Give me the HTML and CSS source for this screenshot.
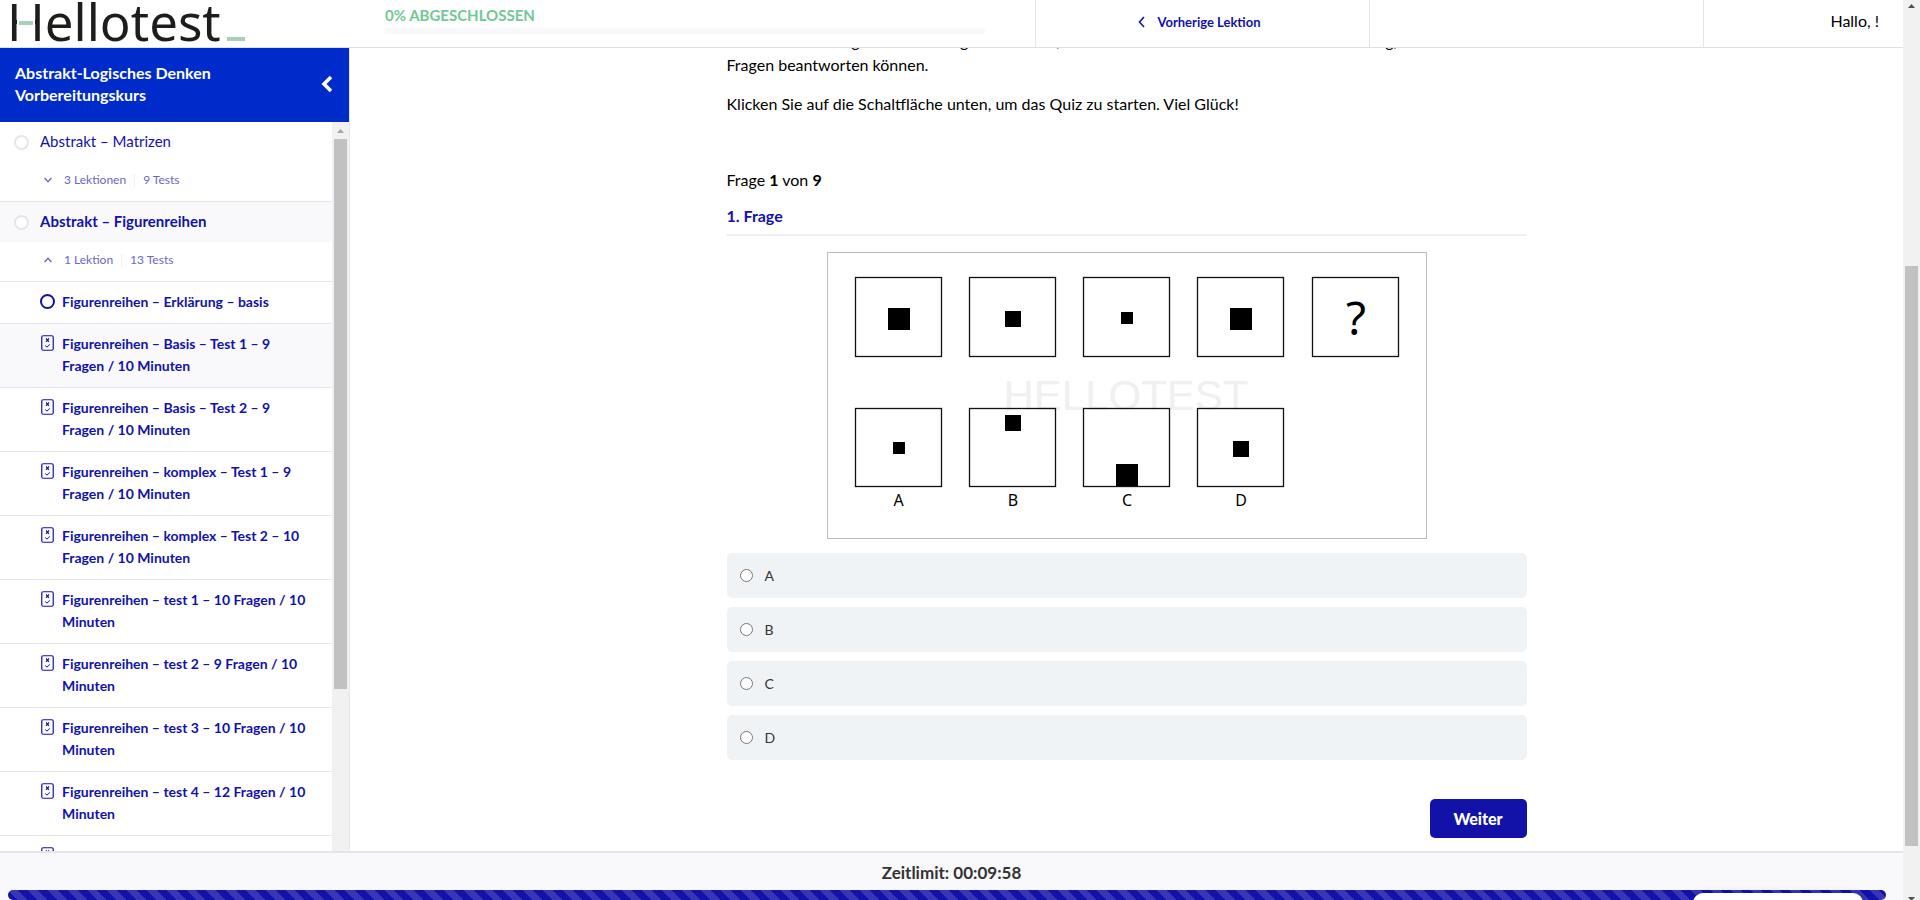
FILE: index.html
```html
<!DOCTYPE html>
<html lang="de">
<head>
<meta charset="utf-8">
<meta name="viewport" content="width=device-width, initial-scale=1">
<title>Hellotest – Figurenreihen Basis Test 1</title>
<link rel="stylesheet" href="styles.css">
</head>
<body>
<svg class="defs" aria-hidden="true">
  <symbol id="quiz" viewBox="0 0 13 16">
    <rect x="0.75" y="0.75" width="11.5" height="14.5" rx="1.5" fill="none" stroke="currentColor" stroke-width="1.2"/>
    <path d="M5 3.5l3 3.4M8 3.5L5 6.900" stroke="currentColor" stroke-width="1.2" fill="none"/>
    <path d="M4.200 10.500l1.800 1.600 2.900-2.700" stroke="currentColor" fill="none"/>
  </symbol>
</svg>
<div class="page">
  <div class="app">
    <header class="topbar">
      <a class="logo" href="#" aria-label="Hellotest">
        <svg width="250" height="47" viewBox="0 0 250 47">
          <text class="logo-text" x="7" y="41">Hellotest</text>
          <rect x="17" y="16" width="18" height="12" fill="#fff"/>
          <rect x="19" y="21" width="14" height="4" fill="#a3d3b5"/>
          <rect x="227" y="37" width="18" height="4" fill="#a3d3b5"/>
        </svg>
      </a>
      <div class="progress">
        <div class="progress-label">0% ABGESCHLOSSEN</div>
        <div class="progress-track"></div>
      </div>
      <nav class="cell"><a class="prev" href="#"><svg width="7" height="12" viewBox="0 0 7 12"><path d="M6 1L1.500 6 6 11" fill="none" stroke="currentColor" stroke-width="1.600"/></svg>Vorherige Lektion</a></nav>
      <div class="cell"></div>
      <div class="cell user">Hallo, !</div>
    </header>
    <div class="body">
      <aside class="sidebar">
        <div class="course">
          <a class="course-title" href="#">Abstrakt-Logisches Denken Vorbereitungskurs</a>
          <button class="collapse" aria-label="Menü einklappen"><svg width="12" height="18" viewBox="0 0 12 18"><path d="M10 2L3 9l7 7" fill="none" stroke="currentColor" stroke-width="3.600"/></svg></button>
        </div>
        <div class="scroller">
          <div class="list">
            <section class="topic">
              <a class="topic-title" href="#"><span class="ring"></span><span class="topic-name">Abstrakt – Matrizen</span></a>
              <button class="expand"><svg width="8" height="6" viewBox="0 0 8 6"><path d="M0.500 1L4 4.700 7.500 1" fill="none" stroke="currentColor" stroke-width="1.300"/></svg><span>3 Lektionen</span><span class="sep"></span><span>9 Tests</span></button>
            </section>
            <section class="topic">
              <a class="topic-title current" href="#"><span class="ring"></span><span class="topic-name">Abstrakt – Figurenreihen</span></a>
              <button class="expand"><svg width="8" height="6" viewBox="0 0 8 6"><path d="M0.500 5L4 1.300 7.500 5" fill="none" stroke="currentColor" stroke-width="1.300"/></svg><span>1 Lektion</span><span class="sep"></span><span>13 Tests</span></button>
            </section>
            <a class="item" href="#"><span class="ring blue"></span><span>Figurenreihen – Erklärung – basis</span></a>
            <a class="item active" href="#"><svg class="q"><use href="#quiz"/></svg><span>Figurenreihen – Basis – Test 1 – 9<br>Fragen / 10 Minuten</span></a>
            <a class="item" href="#"><svg class="q"><use href="#quiz"/></svg><span>Figurenreihen – Basis – Test 2 – 9<br>Fragen / 10 Minuten</span></a>
            <a class="item" href="#"><svg class="q"><use href="#quiz"/></svg><span>Figurenreihen – komplex – Test 1 – 9<br>Fragen / 10 Minuten</span></a>
            <a class="item" href="#"><svg class="q"><use href="#quiz"/></svg><span>Figurenreihen – komplex – Test 2 – 10<br>Fragen / 10 Minuten</span></a>
            <a class="item" href="#"><svg class="q"><use href="#quiz"/></svg><span>Figurenreihen – test 1 – 10 Fragen / 10<br>Minuten</span></a>
            <a class="item" href="#"><svg class="q"><use href="#quiz"/></svg><span>Figurenreihen – test 2 – 9 Fragen / 10<br>Minuten</span></a>
            <a class="item" href="#"><svg class="q"><use href="#quiz"/></svg><span>Figurenreihen – test 3 – 10 Fragen / 10<br>Minuten</span></a>
            <a class="item" href="#"><svg class="q"><use href="#quiz"/></svg><span>Figurenreihen – test 4 – 12 Fragen / 10<br>Minuten</span></a>
            <a class="item" href="#"><svg class="q"><use href="#quiz"/></svg><span>Figurenreihen – test 5 – 12 Fragen / 10<br>Minuten</span></a>
          </div>
          <div class="bar side-bar"><svg width="17" height="17" viewBox="0 0 17 17"><path d="M5 11l3.500-4 3.500 4z" fill="#a3a3a3"/></svg><div class="thumb side-thumb"></div></div>
        </div>
      </aside>
      <main class="main">
        <div class="content">
          <p class="intro">Bitte arbeiten Sie genau aber ruhig an dem Test, weil Sie nur dann in der Zeit alle Schritte richtig, damit Sie alle<br>Fragen beantworten können.</p>
          <p class="intro">Klicken Sie auf die Schaltfläche unten, um das Quiz zu starten. Viel Glück!</p>
          <p class="counter">Frage <b>1</b> von <b>9</b></p>
          <h2 class="question">1. Frage</h2>
          <svg class="figure" viewBox="0 0 600 288" role="img" aria-label="Figurenreihe">
            <rect x="0.500" y="0.500" width="599" height="286" fill="#fff" stroke="#bbb"/>
            <text class="mark" x="299" y="158" text-anchor="middle">HELLOTEST</text>
            <g fill="none" stroke="#111" stroke-width="1.300">
              <rect x="28.500" y="25.500" width="86" height="79"/><rect x="142.500" y="25.500" width="86" height="79"/><rect x="256.500" y="25.500" width="86" height="79"/><rect x="370.500" y="25.500" width="86" height="79"/><rect x="485.500" y="25.500" width="86" height="79"/>
              <rect x="28.500" y="156.500" width="86" height="78"/><rect x="142.500" y="156.500" width="86" height="78"/><rect x="256.500" y="156.500" width="86" height="78"/><rect x="370.500" y="156.500" width="86" height="78"/>
            </g>
            <path d="M61 56h22v22h-22zM178 59h16v16h-16zM294 60h12v12h-12zM403 56h22v22h-22zM66 190h12v12h-12zM178 163h16v16h-16zM289 212h22v22h-22zM406 189h16v16h-16z"/>
            <text class="mystery" x="529" y="83" text-anchor="middle">?</text>
            <g class="letters" text-anchor="middle"><text x="71.500" y="254">A</text><text x="186" y="254">B</text><text x="300" y="254">C</text><text x="414" y="254">D</text></g>
          </svg>
          <div class="answers">
            <label class="answer"><input type="radio" name="answer">A</label>
            <label class="answer"><input type="radio" name="answer">B</label>
            <label class="answer"><input type="radio" name="answer">C</label>
            <label class="answer"><input type="radio" name="answer">D</label>
          </div>
          <button class="next">Weiter</button>
        </div>
      </main>
    </div>
    <footer class="timer">
      <div class="time">Zeitlimit: 00:09:58</div>
      <div class="stripes"></div>
      <div class="popup"></div>
    </footer>
  </div>
  <div class="bar page-bar"><svg width="17" height="12" viewBox="0 0 17 12"><path d="M5 8l3.500-4 3.500 4z" fill="#505050"/></svg><div class="thumb page-thumb"></div><svg class="down" width="17" height="4" viewBox="0 0 17 4"><path d="M5 1h7L8.500 5z" fill="#505050"/></svg></div>
</div>
</body>
</html>
```
FILE: styles.css
```css
* { box-sizing: border-box; }
body {
  margin: 0;
  font-family: Lato, "Noto Sans", sans-serif;
  font-size: 16px;
  line-height: 22px;
  color: #000;
  background: #fff;
}
a { color: inherit; text-decoration: none; }
button { font: inherit; border: 0; background: none; cursor: pointer; }
p, h2 { margin: 0; }
.defs { display: none; }
.page { display: flex; height: 100vh; overflow: hidden; }
.app { flex: 1; min-width: 0; display: flex; flex-direction: column; }

.topbar { display: flex; height: 48px; flex: none; border-bottom: 1px solid #dfe0ea; }
.logo { width: 350px; flex: none; }
.logo svg { display: block; overflow: visible; }
.logo-text { font-family: "Noto Sans", sans-serif; font-size: 51px; fill: #1d1d1b; }
.progress { flex: 1; padding: 4px 50px 0 35px; }
.progress-label { color: #70c995; font-weight: 700; font-size: 15px; }
.progress-track { height: 6px; margin-top: 2px; background: #f9f9fc; }
.cell { width: 334px; border-left: 1px solid #e2e4ed; display: flex; align-items: center; justify-content: center; }
.user { width: 200px; justify-content: flex-end; padding: 0 24px 6px 0; }
.prev { display: flex; align-items: center; gap: 12px; color: #1212a8; font-size: 13px; font-weight: 700; padding: 0 6px 3px 0; }

.body { flex: 1; min-height: 0; display: flex; }
.sidebar { width: 350px; flex: none; display: flex; flex-direction: column; color: #1212a8; border-right: 1px solid #e5e6ee; }
.course { flex: none; background: #002bcb; color: #fff; display: flex; justify-content: space-between; align-items: center; padding: 14px 16px 16px 15px; }
.course-title { width: 230px; font-weight: 700; }
.collapse { color: #fff; padding: 0; width: 12px; height: 18px; display: flex; }
.scroller { flex: 1; min-height: 0; display: flex; }
.list { flex: 1; min-width: 0; overflow: hidden; }
.topic { border-bottom: 1px solid #e2e4f0; }
.topic-title { display: flex; align-items: center; gap: 11px; height: 40px; padding-left: 14px; font-size: 15px; }
.topic-name { padding-bottom: 2px; }
.current { background: #f9f9fc; font-weight: 700; }
.ring { width: 15px; height: 15px; flex: none; border: 2px solid #e2e6eb; border-radius: 50%; background: #fff; }
.ring.blue { border-color: #1212a8; margin-top: 3px; }
.expand { height: 39px; display: flex; align-items: center; padding: 0 0 3px 44px; color: #6a66c8; font-size: 12px; }
.expand svg { margin-right: 12px; }
.sep { width: 1px; height: 13px; margin: 0 8px; background: #eeeef4; }
.item { display: flex; gap: 7px; padding: 9px 8px 10px 40px; border-bottom: 1px solid #e2e4f0; font-size: 14px; font-weight: 700; white-space: nowrap; }
.active { background: #f9f9fc; }
.q { width: 13px; height: 16px; margin: 2px 1px 0; flex: none; }

.bar { width: 17px; flex: none; background: #f1f1f1; display: flex; flex-direction: column; align-items: center; }
.bar svg { display: block; flex: none; }
.thumb { width: 13px; background: #c1c1c1; }
.side-thumb { height: 550px; }
.page-bar { height: 100%; }
.page-thumb { height: 580px; margin-top: 254px; }
.down { margin-top: auto; }

.main { flex: 1; min-width: 0; overflow: hidden; display: flex; flex-direction: column; justify-content: flex-end; align-items: center; padding-bottom: 13px; }
.content { width: 100%; max-width: 800px; display: flex; flex-direction: column; }
.intro { margin-bottom: 15px; line-height: 24px; white-space: nowrap; }
.counter { margin-top: 38px; }
.question { margin-top: 14px; padding-bottom: 7px; border-bottom: 2px solid #efeff1; font-size: 16px; line-height: 22px; color: #1212a8; }
.figure { display: block; width: 75%; margin: 16px auto 13px; }
.mark { font: 42px "Liberation Sans", sans-serif; fill: #f0f0f0; }
.mystery { font: 46px "Noto Sans", sans-serif; }
.letters { font: 16px "Noto Sans", sans-serif; }
.answers { display: flex; flex-direction: column; gap: 9px; }
.answer { height: 45px; display: flex; align-items: center; gap: 12px; padding-left: 13px; border-radius: 5px; background: #eff3f6; color: #333; font-size: 14px; }
.answer input { margin: 0; width: 13px; height: 13px; }
.next { align-self: flex-end; width: 97px; height: 39px; margin-top: 39px; padding: 0; border-radius: 5px; background: #1212a8; color: #fff; font-weight: 900; }

.timer { flex: none; position: relative; height: 49px; overflow: hidden; padding-top: 9px; border-top: 2px solid #e5e5e7; background: #f9f9fc; }
.time { text-align: center; font-size: 17px; font-weight: 700; color: #333; }
.stripes { height: 10px; margin: 6px 17px 0 8px; border-radius: 6px; background: repeating-linear-gradient(45deg, #1212a8 0 7px, #3636b6 7px 14px); }
.popup { position: absolute; right: 40px; top: 40px; width: 170px; height: 30px; border-radius: 10px; background: #fff; box-shadow: 0 0 8px rgba(0, 0, 0, 0.12); }
```
